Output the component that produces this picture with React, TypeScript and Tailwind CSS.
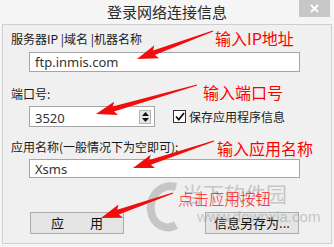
import React from "react";

type Pt = [number, number];

// tapered red annotation arrow: thin tail, wide swept head
const arrowPoints = (tail: Pt, tip: Pt, head = 18, wing = 7) => {
  const dx = tip[0] - tail[0];
  const dy = tip[1] - tail[1];
  const len = Math.hypot(dx, dy);
  const ux = dx / len;
  const uy = dy / len;
  const nx = -uy;
  const ny = ux;
  const bx = tip[0] - ux * head;
  const by = tip[1] - uy * head;
  const p = (x: number, y: number) => `${x.toFixed(1)},${y.toFixed(1)}`;
  return [
    p(tail[0] + nx * 0.5, tail[1] + ny * 0.5),
    p(bx + nx * 2.5, by + ny * 2.5),
    p(bx + nx * wing - ux * 3, by + ny * wing - uy * 3),
    p(tip[0], tip[1]),
    p(bx - nx * wing - ux * 3, by - ny * wing - uy * 3),
    p(bx - nx * 2.5, by - ny * 2.5),
    p(tail[0] - nx * 0.5, tail[1] - ny * 0.5),
  ].join(" ");
};

const arrows: { tail: Pt; tip: Pt }[] = [
  { tail: [213, 31], tip: [137, 59] },
  { tail: [197, 85], tip: [96, 114] },
  { tail: [214, 141], tip: [133, 168] },
  { tail: [173, 193], tip: [101, 218] },
];

const App = () => {
  return (
    <div className="relative w-[334px] h-[247px] bg-[#f5f5f5] overflow-hidden select-none font-['Noto_Sans_CJK_SC','Noto_Sans',sans-serif]">
      {/* Title bar */}
      <div className="relative h-[24px] flex items-center justify-center">
        <span className="text-[15px] text-[#2b2b2b] leading-none -mt-[1px]">登录网络连接信息</span>
        <div className="absolute right-[4px] top-0 w-[31px] h-[17px] bg-[#c7c7c7] flex items-center justify-center">
          <svg width="9" height="9" viewBox="0 0 9 9">
            <path d="M1 1 L8 8 M8 1 L1 8" stroke="#ffffff" strokeWidth="1.8" />
          </svg>
        </div>
      </div>

      {/* Body */}
      <div className="mx-[2px] h-[220px] border border-[#cfcfcf] bg-[#f0f0f0] pl-[8px] text-[12px] leading-[16px] text-[#1a1a1a]">
        <div className="mt-[6px] h-[16px]">服务器IP |域名 |机器名称</div>
        <div className="ml-[18px] mt-[5px] w-[271px] h-[20px] border border-[#a5a5a5] bg-white pl-[5px] flex items-center">
          <span className="text-[13px] leading-none text-[#333333] pt-[1px] font-['Noto_Sans',sans-serif]">ftp.inmis.com</span>
        </div>

        <div className="mt-[14px] h-[16px]">端口号:</div>
        <div className="mt-[4px] flex items-center">
          <div className="ml-[18px] w-[126px] h-[21px] border border-[#a5a5a5] bg-white flex items-center">
            <span className="flex-1 pl-[5px] pt-[4px] text-[13px] leading-none text-[#333333] font-['Noto_Sans',sans-serif]">3520</span>
            <div className="mr-[3px] w-[12px] h-[14px] bg-[#e6e6e6] border border-[#b5b5b5] flex flex-col items-center justify-center gap-[2px]">
              <svg width="7" height="4" viewBox="0 0 7 4">
                <path d="M0 4 L3.5 0 L7 4 Z" fill="#111" />
              </svg>
              <svg width="7" height="4" viewBox="0 0 7 4">
                <path d="M0 0 L7 0 L3.5 4 Z" fill="#111" />
              </svg>
            </div>
          </div>
          <div className="ml-[18px] w-[13px] h-[13px] border border-[#333333] bg-white flex items-center justify-center">
            <svg width="10" height="9" viewBox="0 0 10 9">
              <path d="M1 4.5 L3.8 7.5 L9 1" stroke="#111" strokeWidth="1.8" fill="none" />
            </svg>
          </div>
          <span className="ml-[3px]">保存应用程序信息</span>
        </div>

        <div className="mt-[12px] h-[16px]">应用名称(一般情况下为空即可):</div>
        <div className="ml-[18px] mt-[4px] w-[271px] h-[19px] border border-[#a5a5a5] bg-white pl-[5px] flex items-end overflow-hidden">
          <span className="text-[13px] leading-[15px] text-[#333333] font-['Noto_Sans',sans-serif]">Xsms</span>
        </div>

        <div className="mt-[34px] flex items-center text-[13px] text-[#111]">
          <button className="ml-[19px] w-[94px] h-[22px] border border-[#adadad] bg-[#e4e4e4] flex items-center justify-center gap-[26px]">
            <span>应</span>
            <span>用</span>
          </button>
          <button className="ml-[81px] w-[94px] h-[22px] border border-[#adadad] bg-[#e4e4e4] flex items-center justify-center">
            信息另存为...
          </button>
        </div>
      </div>

      {/* Watermark */}
      <div className="absolute left-[146px] top-[181px] flex opacity-40 pointer-events-none text-[#8a8a8a]">
        <svg width="42" height="52" viewBox="0 0 42 52">
          <path d="M30 6 C14 2 3 16 5 30 C7 44 20 50 30 44" stroke="#8a8a8a" strokeWidth="8" fill="none" />
        </svg>
        <div className="-ml-[6px] flex flex-col">
          <span className="text-[21px] leading-[24px]">当下软件园</span>
          <span className="ml-[15px] mt-[4px] text-[15px] leading-[16px] font-['Liberation_Sans',sans-serif]">www.downxia.com</span>
        </div>
      </div>

      {/* Annotations */}
      <svg className="absolute inset-0 pointer-events-none" width="334" height="247" viewBox="0 0 334 247">
        {arrows.map((a, i) => (
          <polygon key={i} points={arrowPoints(a.tail, a.tip)} fill="#f20d0d" />
        ))}
      </svg>
      <span className="absolute left-[215px] top-[28px] text-[16px] leading-[20px] text-[#ff0000]">输入IP地址</span>
      <span className="absolute left-[203px] top-[82px] text-[16px] leading-[20px] text-[#ff0000]">输入端口号</span>
      <span className="absolute left-[217px] top-[138px] text-[16px] leading-[20px] text-[#ff0000]">输入应用名称</span>
      <span className="absolute left-[178px] top-[188px] text-[15.5px] leading-[20px] text-[#ff2222] font-light">点击应用按钮</span>
    </div>
  );
};

export default App;
